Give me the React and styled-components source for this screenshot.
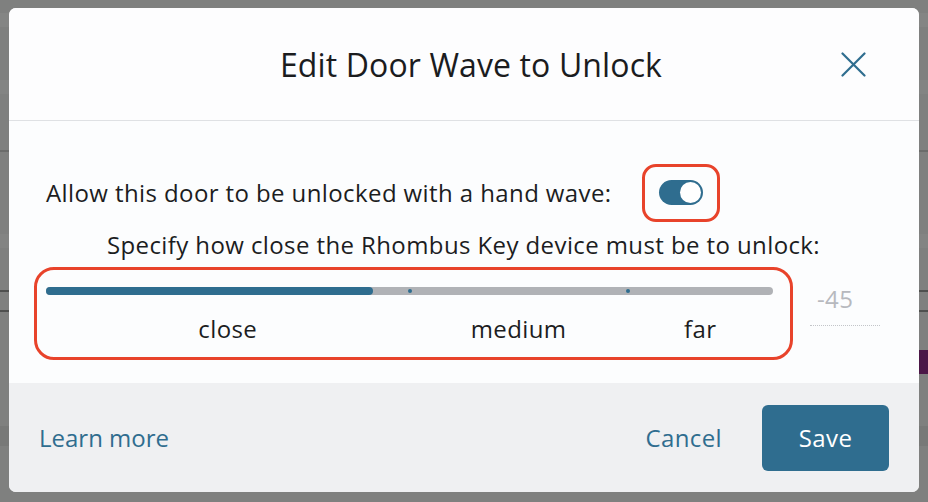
import React, { useState } from "react";
import styled, { createGlobalStyle } from "styled-components";

const teal = "#2f6d8f";
const annot = "#e8432b";
const font = `"Open Sans", "Noto Sans", "Liberation Sans", sans-serif`;

const Global = createGlobalStyle`
  html, body { margin: 0; padding: 0; }
  body {
    width: 928px;
    height: 502px;
    overflow: hidden;
    background: #7f807f;
    font-family: ${font};
  }
  * { box-sizing: border-box; }
`;

/* dimmed page behind the dialog */
const Page = styled.div`
  position: relative;
  width: 928px;
  height: 502px;
  overflow: hidden;
  display: flex;
  flex-direction: column;
  background: #7f807f;
`;

const Band = styled.div`
  height: ${(p) => p.$h}px;
  flex: none;
  background: ${(p) => p.$bg || "transparent"};
  border-bottom: ${(p) => (p.$line ? `2px solid ${p.$line}` : "none")};
  display: flex;
  align-items: center;
  color: #2a2b2a;
`;

const PurpleTag = styled.div`
  margin-left: auto;
  width: 9px;
  height: 24px;
  background: #4b1747;
`;

const PageLabel = styled.div`
  display: flex;
  align-items: flex-start;
  gap: 14px;
  margin-left: 432px;
  padding-top: 10px;
  font-size: 24px;
  color: #2a2b2a;
  line-height: 1;
`;

/* dialog */
const Dialog = styled.div`
  position: absolute;
  left: 9px;
  top: 8px;
  width: 910px;
  height: 484px;
  border-radius: 7px;
  overflow: hidden;
  background: #fcfdfe;
  display: flex;
  flex-direction: column;
  font-family: ${font};
  color: #1c1d1f;
  letter-spacing: 0.4px;
`;

const Header = styled.div`
  height: 113px;
  flex: none;
  display: flex;
  align-items: center;
  padding: 0 53px 0 112px;
  border-bottom: 1px solid #dfe1e4;
  background: #fdfdfe;
`;

const Title = styled.h2`
  flex: 1;
  margin: 0;
  text-align: center;
  font-size: 32px;
  font-weight: 400;
  letter-spacing: 0.12px;
  color: #1b1c1e;
`;

const CloseButton = styled.button`
  margin-left: 20px;
  width: 25px;
  height: 25px;
  padding: 0;
  border: 0;
  background: none;
  display: flex;
  color: ${teal};
  cursor: pointer;
`;

const Body = styled.div`
  flex: 1;
  display: flex;
  flex-direction: column;
  padding: 43px 38px 0 25px;
`;

const WaveRow = styled.div`
  display: flex;
  align-items: center;
  gap: 30px;
  padding-left: 12px;
`;

const Text = styled.p`
  margin: 0;
  font-size: 24px;
  line-height: 30px;
  color: #1c1d1f;
  text-align: ${(p) => p.$align || "left"};
`;

const Highlight = styled.div`
  border: 3px solid ${annot};
  border-radius: ${(p) => p.$radius}px;
  padding: ${(p) => p.$pad};
  flex: none;
`;

const Toggle = styled.button`
  width: 44px;
  height: 25px;
  border-radius: 13px;
  border: 0;
  padding: 2px;
  background: ${(p) => (p.$on ? teal : "#b0b2b6")};
  display: flex;
  justify-content: ${(p) => (p.$on ? "flex-end" : "flex-start")};
  cursor: pointer;
`;

const Knob = styled.span`
  width: 21px;
  height: 21px;
  border-radius: 50%;
  background: #fff;
`;

const Hint = styled(Text)`
  margin-top: 8px;
  padding-left: 12px;
`;

const SliderRow = styled.div`
  margin-top: 7px;
  display: flex;
  align-items: flex-start;
`;

const Track = styled.div`
  position: relative;
  width: 727px;
  height: 8px;
  border-radius: 4px;
  background: #b0b2b6;
`;

const Fill = styled.div`
  height: 100%;
  border-radius: 4px;
  background: ${teal};
`;

const Tick = styled.span`
  position: absolute;
  top: 2px;
  width: 4px;
  height: 4px;
  margin-left: -2px;
  border-radius: 50%;
  background: ${teal};
`;

const Marks = styled.div`
  display: grid;
  grid-template-columns: 50fr 30fr 20fr;
  width: 727px;
  margin-top: 19px;
`;

const Mark = styled.span`
  text-align: center;
  font-size: 24px;
  line-height: 30px;
  color: #1c1d1f;
`;

const Value = styled.div`
  margin: 17px 0 0 17px;
  width: 70px;
  padding: 0 0 11px 7px;
  border-bottom: 1px dotted #c3c5c9;
  font-size: 24px;
  line-height: 30px;
  color: #b7b9be;
`;

const Footer = styled.div`
  height: 109px;
  flex: none;
  background: #eff0f2;
  display: flex;
  align-items: center;
  padding: 0 30px;
`;

const LinkButton = styled.button`
  border: 0;
  background: none;
  padding: 0;
  font-family: ${font};
  font-size: 24px;
  letter-spacing: ${(p) => (p.$push ? "0.4px" : "0px")};
  color: ${teal};
  cursor: pointer;
  margin-left: ${(p) => (p.$push ? "auto" : "0")};
`;

const SaveButton = styled.button`
  margin-left: 40px;
  width: 127px;
  height: 66px;
  border: 0;
  border-radius: 6px;
  background: ${teal};
  color: #fff;
  font-family: ${font};
  font-size: 24px;
  letter-spacing: 0.4px;
  cursor: pointer;
`;

const marks = [{ label: "close" }, { label: "medium" }, { label: "far" }];

export default function App() {
  const [enabled, setEnabled] = useState(true);
  const level = 45;

  return (
    <>
      <Global />
      <Page>
        <Band $h={13} />
        <Band $h={14} $bg="#848584" />
        <Band $h={53} />
        <Band $h={14} $bg="#838483" />
        <Band $h={58} $line="#6b6c6b" />
        <Band $h={82} />
        <Band $h={14} $bg="#838483" />
        <Band $h={44} $line="#4f504f" />
        <Band $h={20} $line="#4f504f" />
        <Band $h={38} />
        <Band $h={24}>
          <PurpleTag />
        </Band>
        <Band $h={52} />
        <Band $h={20} $bg="#787978" />
        <Band $h={36}>
          <PageLabel>
            <svg width="26" height="20" viewBox="0 0 26 20" fill="none" stroke="#2a2b2a" strokeWidth="2">
              <path d="M2 6h10M14 2v14h6V4" />
            </svg>
            Doorbell Rates
          </PageLabel>
        </Band>

        <Dialog role="dialog" aria-label="Edit Door Wave to Unlock">
          <Header>
            <Title>Edit Door Wave to Unlock</Title>
            <CloseButton aria-label="Close">
              <svg width="25" height="25" viewBox="0 0 25 25" fill="none" stroke="currentColor" strokeWidth="2.2" strokeLinecap="round">
                <path d="M1.5 1.5l22 22M23.5 1.5l-22 22" />
              </svg>
            </CloseButton>
          </Header>

          <Body>
            <WaveRow>
              <Text>Allow this door to be unlocked with a hand wave:</Text>
              <Highlight $radius={14} $pad="13px 14px 14px 14px">
                <Toggle $on={enabled} onClick={() => setEnabled(!enabled)} aria-pressed={enabled}>
                  <Knob />
                </Toggle>
              </Highlight>
            </WaveRow>

            <Hint $align="center">Specify how close the Rhombus Key device must be to unlock:</Hint>

            <SliderRow>
              <Highlight $radius={20} $pad="17px 17px 13px 9px">
                <Track>
                  <Fill style={{ width: `${level}%` }} />
                  <Tick style={{ left: "50%" }} />
                  <Tick style={{ left: "80%" }} />
                </Track>
                <Marks>
                  {marks.map((m) => (
                    <Mark key={m.label}>{m.label}</Mark>
                  ))}
                </Marks>
              </Highlight>
              <Value>-45</Value>
            </SliderRow>
          </Body>

          <Footer>
            <LinkButton>Learn more</LinkButton>
            <LinkButton $push>Cancel</LinkButton>
            <SaveButton>Save</SaveButton>
          </Footer>
        </Dialog>
      </Page>
    </>
  );
}
